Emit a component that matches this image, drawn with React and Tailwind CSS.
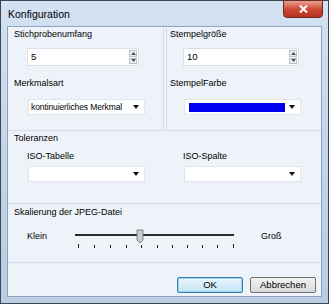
import React from "react";

const FONT = { fontFamily: '"Liberation Sans", Arial, sans-serif' };

function Spinner({ value, className }) {
  return (
    <div className={`flex h-[18px] items-stretch border border-[#d9dfe7] bg-white ${className}`}>
      <div className="flex flex-1 items-center pl-[3px] text-[9.5px] text-black">{value}</div>
      <div className="my-[1px] mr-[1px] flex w-[8px] flex-col gap-[1px]">
        <div className="flex flex-1 items-center justify-center border border-[#b9c2cc] bg-[#eef0f3]">
          <svg width="5" height="3" viewBox="0 0 5 3"><path d="M0 3 L2.5 0 L5 3 Z" fill="#555" /></svg>
        </div>
        <div className="flex flex-1 items-center justify-center border border-[#b9c2cc] bg-[#eef0f3]">
          <svg width="5" height="3" viewBox="0 0 5 3"><path d="M0 0 L2.5 3 L5 0 Z" fill="#555" /></svg>
        </div>
      </div>
    </div>
  );
}

function Combo({ children, className }) {
  return (
    <div className={`flex h-[16px] items-center border border-[#e1e6ec] bg-white ${className}`}>
      <div className="flex flex-1 items-center overflow-hidden whitespace-nowrap pl-[2px] text-[8.5px] tracking-[-0.1px] text-black">
        {children}
      </div>
      <svg className="ml-[3px] mr-[5px] shrink-0" width="6" height="4" viewBox="0 0 6 4"><path d="M0 0 L6 0 L3 4 Z" fill="#111" /></svg>
    </div>
  );
}

function Slider() {
  const ticks = [80, 96, 112, 128, 143, 159, 174, 189, 204, 219, 235];
  return (
    <svg width="180" height="26" viewBox="70 224 180 26" className="block shrink-0">
      <rect x="77" y="232" width="159" height="2" fill="#2b2b2b" />
      {ticks.map((x, i) => (
        <rect
          key={x}
          x={x}
          y={i === 0 || i === ticks.length - 1 ? 242 : 243}
          width="1"
          height={i === 0 || i === ticks.length - 1 ? 4 : 3}
          fill="#222"
        />
      ))}
      <path d="M139 228 L145 228 L145 238 L142 241 L139 238 Z" fill="#c8cbd0" stroke="#6b6f75" strokeWidth="0.8" />
    </svg>
  );
}

export default function App() {
  return (
    <div className="h-[304px] w-[329px] overflow-hidden bg-white" style={FONT}>
      <div className="relative flex h-[304px] w-[329px] flex-col border border-[#3d4452] bg-gradient-to-b from-[#d4e2f2] via-[#c3d5ea] to-[#b8cce4]">
        {/* title bar */}
        <div className="flex h-[25px] items-center pl-[7px] pt-[2px] text-[10.5px] text-black">Konfiguration</div>
        <div className="absolute right-[5px] top-[-1px] flex h-[18px] w-[40px] items-center justify-center rounded-b-[4px] border border-[#6d2a24] bg-gradient-to-b from-[#e8a093] via-[#cf4a35] to-[#b8321f]">
          <svg width="9" height="8" viewBox="0 0 9 8">
            <path d="M1 0.5 L8 7.5 M8 0.5 L1 7.5" stroke="#fff" strokeWidth="2" />
          </svg>
        </div>

        {/* client area */}
        <div className="mx-[6px] flex h-[271px] flex-col border border-[#8fa4bf] bg-[#eef3fa] text-[9px] text-black">
          {/* top section */}
          <div className="flex h-[104px] border-b border-[#d3dde9]">
            <div className="ml-[1px] mt-[1px] flex w-[155px] flex-col border-r border-[#d3dde9] pl-[5px]">
              <div className="h-[12px] leading-[12px]">Stichprobenumfang</div>
              <Spinner value="5" className="ml-[13px] mt-[8px] w-[112px]" />
              <div className="mt-[11px] h-[12px] leading-[12px]">Merkmalsart</div>
              <Combo className="ml-[14px] mt-[10px] w-[117px]">kontinuierliches Merkmal</Combo>
            </div>
            <div className="ml-[2px] mt-[1px] flex flex-1 flex-col border-l border-[#d3dde9] pl-[3px]">
              <div className="h-[12px] leading-[12px]">Stempelgröße</div>
              <Spinner value="10" className="ml-[13px] mt-[8px] w-[116px]" />
              <div className="mt-[11px] h-[12px] leading-[12px]">StempelFarbe</div>
              <Combo className="ml-[14px] mt-[10px] w-[117px]">
                <div className="ml-[2px] h-[9px] w-[96px] bg-[#0000f0]" />
              </Combo>
            </div>
          </div>

          {/* Toleranzen */}
          <div className="flex h-[73px] flex-col border-b border-[#d3dde9] pl-[6px]">
            <div className="mt-[1px] h-[12px] leading-[12px]">Toleranzen</div>
            <div className="mt-[6px] flex">
              <div className="flex w-[156px] flex-col pl-[13px]">
                <div className="h-[12px] leading-[12px]">ISO-Tabelle</div>
                <Combo className="ml-[1px] mt-[4px] w-[117px]" />
              </div>
              <div className="flex flex-col pl-[13px]">
                <div className="h-[12px] leading-[12px]">ISO-Spalte</div>
                <Combo className="ml-[1px] mt-[4px] w-[117px]" />
              </div>
            </div>
          </div>

          {/* Skalierung */}
          <div className="flex h-[59px] flex-col border-b border-[#d3dde9] pl-[6px]">
            <div className="mt-[2px] h-[12px] leading-[12px]">Skalierung der JPEG-Datei</div>
            <div className="mt-[8px] flex items-start">
              <div className="ml-[13px] mt-[4px] h-[12px] w-[41px] leading-[12px]">Klein</div>
              <Slider />
              <div className="ml-[13px] mt-[4px] h-[12px] leading-[12px]">Groß</div>
            </div>
          </div>

          {/* buttons */}
          <div className="flex flex-1 items-start justify-end gap-[7px] pr-[5px] pt-[14px]">
            <button className="h-[16px] w-[66px] rounded-[2px] border border-[#3d7bad] bg-gradient-to-b from-[#eaf6fd] to-[#c4e3f6] text-[9.5px] leading-[14px] text-black shadow-[inset_0_0_0_1px_#9bd4f5]">
              OK
            </button>
            <button className="h-[16px] w-[66px] rounded-[2px] border border-[#707070] bg-gradient-to-b from-[#f2f2f2] to-[#d9d9d9] text-[9.5px] leading-[14px] text-black">
              Abbrechen
            </button>
          </div>
        </div>
      </div>
    </div>
  );
}
